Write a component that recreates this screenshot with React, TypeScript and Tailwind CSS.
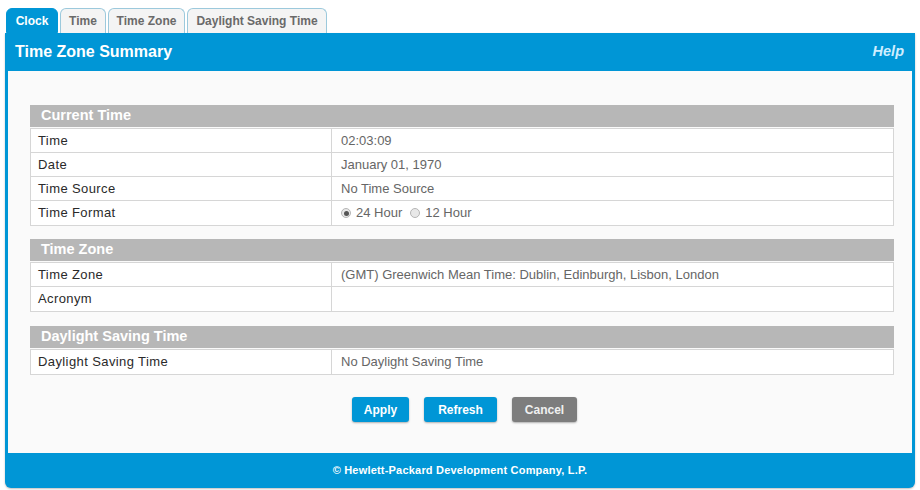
const font = { fontFamily: '"Liberation Sans", Arial, sans-serif' };

function Tab({ label, active, w }: { label: string; active?: boolean; w: string }) {
  return (
    <div
      className={`${w} h-[25px] flex items-center justify-center rounded-t-[6px] border text-[12px] font-bold ${
        active
          ? "bg-[#0096d6] border-[#0096d6] text-white"
          : "bg-[#f4f4f4] border-[#9cc9dc] border-b-0 text-[#6a6a6a]"
      }`}
    >
      {label}
    </div>
  );
}

function SectionHeader({ title }: { title: string }) {
  return (
    <div className="h-[22px] bg-[#b7b7b7] flex items-center pl-[11px] text-[14.5px] font-bold text-white">
      {title}
    </div>
  );
}

function Row({ label, children, last }: { label: string; children?: React.ReactNode; last?: boolean }) {
  return (
    <div className={`flex h-[24px] text-[13px] ${last ? "" : "border-b border-[#d6d6d6]"}`}>
      <div className="w-[301px] shrink-0 border-r border-[#d6d6d6] flex items-center pl-[7px] text-[#2a2a2a] font-medium tracking-[0.4px]">
        {label}
      </div>
      <div className="flex-1 flex items-center pl-[9px] text-[#666]">{children}</div>
    </div>
  );
}

function Table({ children }: { children: React.ReactNode }) {
  return <div className="mt-[1px] border border-[#d6d6d6] bg-white">{children}</div>;
}

function Radio({ checked }: { checked?: boolean }) {
  return (
    <span className="inline-flex w-[10px] h-[10px] rounded-full border border-[#b5b5b5] bg-[#e8e8e8] items-center justify-center mr-[5px]">
      {checked && <span className="w-[5px] h-[5px] rounded-full bg-[#555]" />}
    </span>
  );
}

export default function App() {
  return (
    <div className="w-[920px] h-[490px] bg-white pt-[8px] px-[5px]" style={font}>
      <div className="flex gap-[2px] pl-[1px]">
        <Tab label="Clock" active w="w-[52px]" />
        <Tab label="Time" w="w-[46px]" />
        <Tab label="Time Zone" w="w-[77px]" />
        <Tab label="Daylight Saving Time" w="w-[140px]" />
      </div>
      <div className="w-[910px] rounded-b-[6px] bg-[#0096d6] shadow-[0_1px_2px_rgba(0,0,0,0.25)]">
        <div className="h-[38px] flex items-center justify-between pl-[10px] pr-[11px] rounded-tr-[4px]">
          <span className="text-[16px] font-bold text-white">Time Zone Summary</span>
          <span className="text-[14.5px] font-bold italic text-[#cfeeff]">Help</span>
        </div>
        <div className="mx-[3px] bg-[#fafafa] h-[382px] pt-[34px] pl-[22px] pr-[18px]">
          <SectionHeader title="Current Time" />
          <Table>
            <Row label="Time">02:03:09</Row>
            <Row label="Date">January 01, 1970</Row>
            <Row label="Time Source">No Time Source</Row>
            <Row label="Time Format" last>
              <Radio checked />
              <span className="mr-[8px]">24 Hour</span>
              <Radio />
              <span>12 Hour</span>
            </Row>
          </Table>
          <div className="h-[13px]" />
          <SectionHeader title="Time Zone" />
          <Table>
            <Row label="Time Zone">(GMT) Greenwich Mean Time: Dublin, Edinburgh, Lisbon, London</Row>
            <Row label="Acronym" last />
          </Table>
          <div className="h-[14px]" />
          <SectionHeader title="Daylight Saving Time" />
          <Table>
            <Row label="Daylight Saving Time" last>
              No Daylight Saving Time
            </Row>
          </Table>
          <div className="flex justify-center gap-[15px] mt-[22px] pl-[5px]">
            <button className="w-[57px] h-[25px] rounded-[3px] bg-[#0096d6] text-white text-[12px] font-bold shadow-[0_1px_2px_rgba(0,0,0,0.3)]">
              Apply
            </button>
            <button className="w-[73px] h-[25px] rounded-[3px] bg-[#0096d6] text-white text-[12px] font-bold shadow-[0_1px_2px_rgba(0,0,0,0.3)]">
              Refresh
            </button>
            <button className="w-[65px] h-[25px] rounded-[3px] bg-[#7d7d7d] text-[#f0f0f0] text-[12px] font-bold shadow-[0_1px_2px_rgba(0,0,0,0.3)]">
              Cancel
            </button>
          </div>
        </div>
        <div className="h-[35px] flex items-center justify-center text-[11px] font-bold text-white tracking-[0.2px]">
          © Hewlett-Packard Development Company, L.P.
        </div>
      </div>
    </div>
  );
}
